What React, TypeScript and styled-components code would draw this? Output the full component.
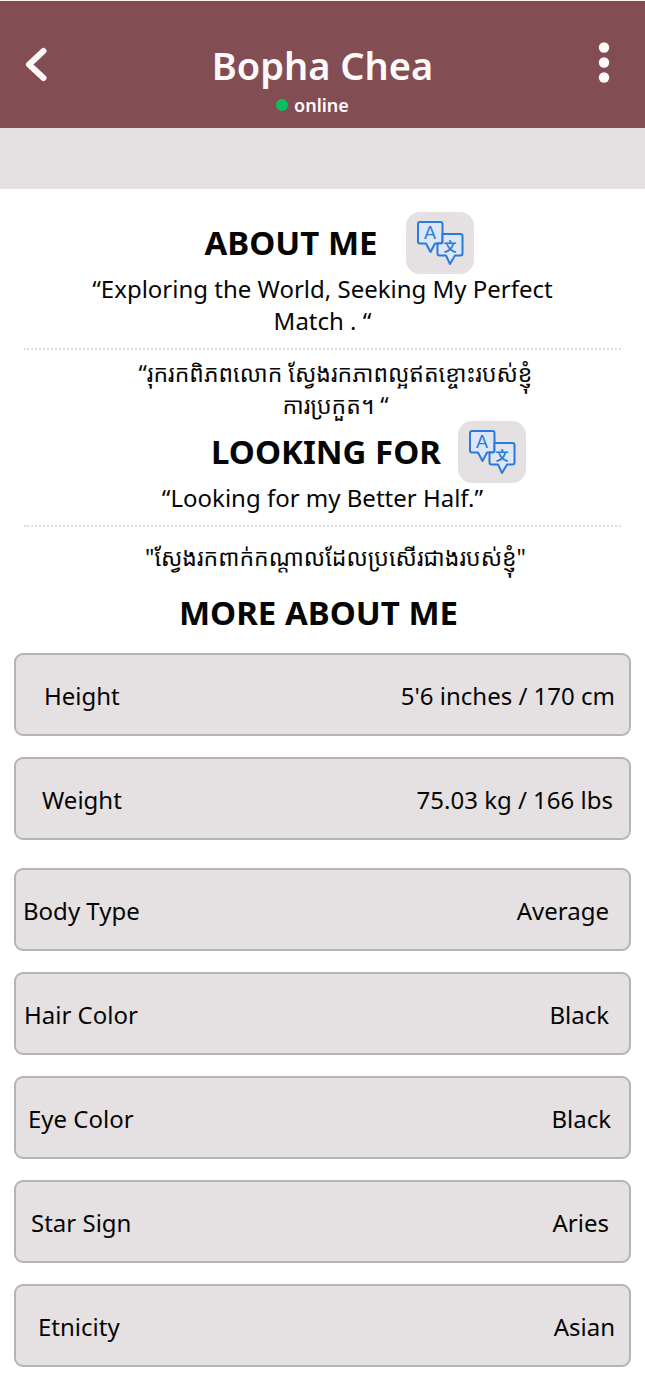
import React from 'react';
import styled, { createGlobalStyle } from 'styled-components';

const GlobalStyle = createGlobalStyle`
  * { box-sizing: border-box; }
  body {
    margin: 0;
    background: #fff;
    color: #060606;
    font-family: "Noto Sans", "Noto Sans Khmer", "Khmer OS", sans-serif;
    font-size: 24px;
    line-height: 32px;
  }
`;

const Page = styled.main`
  padding-bottom: 28px;
`;

const Header = styled.header`
  display: flex;
  align-items: center;
  justify-content: space-between;
  height: 128px;
  padding: 0 24px;
  background: #824e53;
  border-top: 1px solid #fff4ec;
  color: #fffafa;
`;

const IconButton = styled.button`
  display: flex;
  padding: 0;
  border: 0;
  background: none;
  color: inherit;
  cursor: pointer;
`;

const Identity = styled.div`
  display: flex;
  flex-direction: column;
  align-items: center;
  padding-top: 24px;
`;

const Name = styled.h1`
  margin: 0;
  font-size: 38px;
  line-height: 56px;
  font-weight: 600;
`;

const Status = styled.p`
  display: flex;
  align-items: center;
  gap: 6px;
  margin: 0;
  padding-right: 20px;
  font-size: 18px;
  line-height: 24px;
  font-weight: 600;
`;

const Dot = styled.span`
  width: 12px;
  height: 12px;
  border-radius: 50%;
  background: #09bf60;
`;

const Band = styled.div`
  height: 61px;
  background: #e5e1e2;
`;

const Section = styled.section<{ $top: number }>`
  padding: ${(p) => p.$top}px 24px 0;
  text-align: center;
`;

const TitleRow = styled.div<{ $shift: number; $gap: number }>`
  display: flex;
  align-items: center;
  justify-content: center;
  gap: ${(p) => p.$gap}px;
  height: 61px;
  padding-left: ${(p) => p.$shift}px;
`;

const Title = styled.h2`
  margin: 0;
  font-size: 33px;
  line-height: 48px;
  font-weight: 700;
  text-align: center;
`;

const TranslateButton = styled(IconButton)`
  align-items: center;
  justify-content: center;
  width: 68px;
  height: 62px;
  border-radius: 14px;
  background: #e5e1e2;
  color: #2a7bdc;
`;

const Quote = styled.p`
  margin: 0 auto;
  max-width: 480px;
`;

const KhmerQuote = styled(Quote)`
  max-width: none;
  padding-left: 26px;
  font-size: 23px;
`;

const Divider = styled.hr<{ $after: number }>`
  margin: 11px 0 ${(p) => p.$after}px;
  border: 0;
  border-top: 2px dotted #dedede;
`;

const MoreTitle = styled(Title)`
  padding: 16px 8px 0 0;
`;

const Facts = styled.dl<{ $top: number }>`
  display: flex;
  flex-direction: column;
  gap: 21px;
  margin: ${(p) => p.$top}px 14px 0;

  dd {
    margin: 0;
  }
`;

const Fact = styled.div<{ $start: number; $end: number }>`
  display: flex;
  align-items: center;
  justify-content: space-between;
  height: 83px;
  padding: 2px ${(p) => p.$end}px 0 ${(p) => p.$start}px;
  border: 2px solid #b5b3b4;
  border-radius: 9px;
  background: #e5e1e2;
`;

const TranslateIcon = () => (
  <svg width="48" height="46" viewBox="0 0 48 46" fill="#dce6f4" stroke="currentColor" strokeWidth="2" strokeLinejoin="round" aria-hidden="true">
    <path d="M4 2H24.500Q26.500 2 26.500 4V21.500Q26.500 23.500 24.500 23.500H19L14.500 32L10 23.500H4Q2 23.500 2 21.500V4Q2 2 4 2Z" />
    <path d="M26.500 14H44.500Q46.500 14 46.500 16V33.500Q46.500 35.500 44.500 35.500H39L34 44L30 35.500H23.500Q21.500 35.500 21.500 33.500V23.500H24.500Q26.500 23.500 26.500 21.500Z" />
    <text x="14" y="19" textAnchor="middle" fontSize="18" fontWeight="500" fill="currentColor" stroke="none">A</text>
    <text x="34" y="31" textAnchor="middle" fontSize="13" fontWeight="700" fontFamily="'Noto Sans CJK SC', sans-serif" fill="currentColor" stroke="none">文</text>
  </svg>
);

const bodyFacts = [
  { label: 'Height', value: "5'6 inches / 170 cm", start: 28, end: 14 },
  { label: 'Weight', value: '75.03 kg / 166 lbs', start: 26, end: 16 },
];

const profileFacts = [
  { label: 'Body Type', value: 'Average', start: 7, end: 20 },
  { label: 'Hair Color', value: 'Black', start: 8, end: 20 },
  { label: 'Eye Color', value: 'Black', start: 12, end: 18 },
  { label: 'Star Sign', value: 'Aries', start: 15, end: 20 },
  { label: 'Etnicity', value: 'Asian', start: 22, end: 14 },
];

const FactList = ({ top, items }: { top: number; items: typeof bodyFacts }) => (
  <Facts $top={top}>
    {items.map((f) => (
      <Fact key={f.label} $start={f.start} $end={f.end}>
        <dt>{f.label}</dt>
        <dd>{f.value}</dd>
      </Fact>
    ))}
  </Facts>
);

export default function App() {
  return (
    <>
      <GlobalStyle />
      <Page>
        <Header>
          <IconButton aria-label="Back">
            <svg width="34" height="36" viewBox="0 0 34 36" fill="none" stroke="currentColor" strokeWidth="6" strokeLinecap="round" strokeLinejoin="round">
              <path d="M19.500 4L5 17.500L19.500 31" />
            </svg>
          </IconButton>
          <Identity>
            <Name>Bopha Chea</Name>
            <Status><Dot />online</Status>
          </Identity>
          <IconButton aria-label="More options">
            <svg width="34" height="46" viewBox="0 0 34 46" fill="currentColor">
              <circle cx="17" cy="5.500" r="5.200" />
              <circle cx="17" cy="20.500" r="5.200" />
              <circle cx="17" cy="35.500" r="5.200" />
            </svg>
          </IconButton>
        </Header>
        <Band />
        <Section $top={23}>
          <TitleRow $shift={33} $gap={28}>
            <Title>ABOUT ME</Title>
            <TranslateButton aria-label="Translate about me"><TranslateIcon /></TranslateButton>
          </TitleRow>
          <Quote>“Exploring the World, Seeking My Perfect Match . “</Quote>
          <Divider $after={7} />
          <KhmerQuote lang="km">
            “រុករកពិភពលោក ស្វែងរកភាពល្អឥតខ្ចោះរបស់ខ្ញុំ<br />ការប្រកួត។ “
          </KhmerQuote>
        </Section>
        <Section $top={0}>
          <TitleRow $shift={92} $gap={17}>
            <Title>LOOKING FOR</Title>
            <TranslateButton aria-label="Translate looking for"><TranslateIcon /></TranslateButton>
          </TitleRow>
          <Quote>“Looking for my Better Half.”</Quote>
          <Divider $after={14} />
          <KhmerQuote lang="km">"ស្វែងរកពាក់កណ្តាលដែលប្រសើរជាងរបស់ខ្ញុំ"</KhmerQuote>
        </Section>
        <MoreTitle>MORE ABOUT ME</MoreTitle>
        <FactList top={16} items={bodyFacts} />
        <FactList top={28} items={profileFacts} />
      </Page>
    </>
  );
}
